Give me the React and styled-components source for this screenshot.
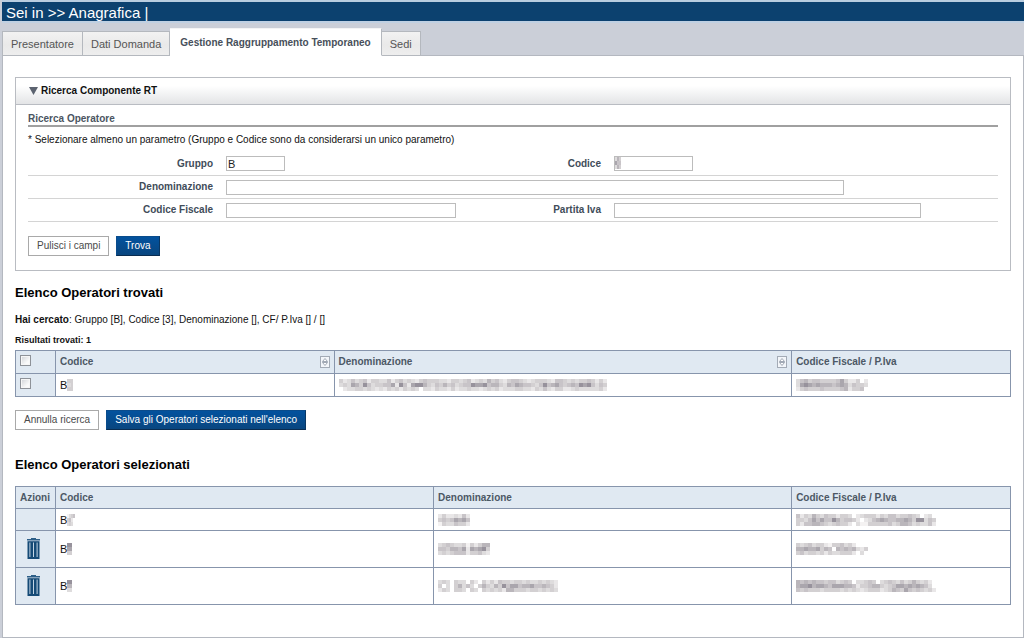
import styled, { createGlobalStyle, css } from 'styled-components'
import { useState } from 'react'

const GlobalStyle = createGlobalStyle`
    * {
        box-sizing: border-box;
    }
    body {
        margin: 0;
        background: #cbcfd8;
        color: #111;
        font-family: 'Liberation Sans', Arial, sans-serif;
        font-size: 10px;
        line-height: 14px;
    }
    button,
    input {
        font: inherit;
    }
    svg {
        display: block;
    }
`
const Root = styled.div`
    min-height: 100vh;
    display: flex;
    flex-direction: column;
    padding-left: 2px;
`
const Breadcrumb = styled.header`
    height: 23px;
    border-top: 2px solid #b9cde0;
    border-bottom: 2px solid #bfd0e2;
    background: #0c416f;
    color: #fff;
    font-size: 15px;
    line-height: 21px;
    padding: 0 4px;
`
const TabBar = styled.nav`
    display: flex;
    align-items: flex-end;
    height: 33px;
    position: relative;
    z-index: 1;
`
const Tab = styled.a`
    height: 25px;
    padding: 0 8px;
    border: 1px solid #b4b8be;
    border-left-width: 0;
    background: linear-gradient(#f2f2f2, #e9e9e9 55%, #eeeeee);
    color: #555;
    font-size: 11px;
    line-height: 24px;
    text-decoration: none;
    white-space: nowrap;
    &:first-child {
        border-left-width: 1px;
    }
    ${({ $active }) =>
        $active &&
        css`
            height: 28px;
            padding: 0 10px;
            border-top-color: #f4f4f4;
            border-bottom-color: #fff;
            background: #fff;
            color: #474f5a;
            font-size: 10px;
            font-weight: 700;
            line-height: 27px;
        `}
`
const Page = styled.main`
    flex: 1;
    margin-top: -1px;
    padding: 21px 12px 32px;
    border: 1px solid #b4b8c0;
    background: #fff;
`
const Box = styled.section`
    border: 1px solid #b9bcc2;
`
const BoxTitle = styled.h2`
    display: flex;
    align-items: center;
    gap: 3px;
    height: 27px;
    margin: 0;
    padding: 0 13px;
    border-bottom: 1px solid #b9bcc2;
    background: linear-gradient(#fff 30%, #e3e4e6);
    color: #111;
    font-size: 10px;
    font-weight: 700;
`
const SearchForm = styled.form`
    padding: 8px 12px 14px;
`
const Legend = styled.h3`
    margin: 0 0 6px;
    border-bottom: 2px solid #a0a0a0;
    color: #4b5561;
    font-size: 10px;
    font-weight: 700;
    line-height: 12px;
`
const Note = styled.p`
    margin: 0;
`
const FieldRow = styled.div`
    display: grid;
    grid-template-columns: 20% 30% 10% 40%;
    align-items: center;
    height: 23px;
    border-bottom: 1px solid #d4d4d4;
    &:first-of-type {
        margin-top: 5px;
        height: 24px;
    }
`
const Label = styled.label`
    padding-right: 9px;
    color: #414c59;
    font-weight: 700;
    text-align: right;
    white-space: nowrap;
`
const FieldCell = styled.div`
    padding-left: 4px;
    height: 15px;
    display: flex;
    position: relative;
    ${({ $wide }) => $wide && 'grid-column: 2 / -1;'}
`
const TextInput = styled.input`
    width: ${({ $width }) => $width};
    height: 15px;
    padding: 0 1px;
    border: 1px solid #bcbcbc;
    border-radius: 0;
    background: #fff;
    color: #222;
    font-size: 11px;
    outline: none;
`
const FieldMask = styled.div`
    position: absolute;
    left: 5px;
    top: 1px;
    display: flex;
`
const Buttons = styled.div`
    display: flex;
    gap: 7px;
    margin-top: ${({ $top }) => $top};
`
const Button = styled.button`
    height: 20px;
    padding: 0 8px;
    border: 1px solid #a9a9a9;
    border-radius: 0;
    background: #fff;
    color: #4a4a4a;
    line-height: 18px;
    white-space: nowrap;
    cursor: pointer;
    ${({ $primary }) =>
        $primary &&
        css`
            border-color: #0a4c8c #0a3763 #0a2c50 #0a4c8c;
            background: linear-gradient(#03529e, #09467f);
            color: #fff;
        `}
`
const Heading = styled.h2`
    margin: ${({ $top }) => $top} 0 0;
    color: #000;
    font-size: 13px;
    font-weight: 700;
    line-height: 16px;
`
const Summary = styled.p`
    margin: 12px 0 6px;
`
const Count = styled.p`
    margin: 0 0 3px;
    font-size: 9px;
    font-weight: 700;
`
const Table = styled.table`
    width: 100%;
    margin-top: ${({ $top }) => $top};
    border-collapse: collapse;
    table-layout: fixed;
    th,
    td {
        height: ${({ $rowHeight }) => $rowHeight};
        padding: 0 4px;
        border: 1px solid #8795ac;
        text-align: left;
        vertical-align: middle;
    }
    th {
        background: #e0e9f2;
        color: #4c5865;
        font-weight: 700;
        white-space: nowrap;
    }
    td:first-child {
        background: #e0e9f2;
    }
`
const Col = styled.col`
    width: ${({ $width }) => $width};
`
const Row = styled.tr`
    ${({ $tall }) => $tall && '&& > td { height: 37px; }'}
`
const HeadCell = styled.div`
    display: flex;
    align-items: center;
    justify-content: space-between;
`
const Code = styled.div`
    display: flex;
    align-items: center;
    font-size: 11px;
`
const Checkbox = styled.input`
    appearance: none;
    display: block;
    width: 11px;
    height: 11px;
    margin: 0 0 3px;
    border: 1px solid #8e9298;
    background: linear-gradient(135deg, #cfd2d6, #fafafa 70%);
    box-shadow: inset 0 0 0 1px #f6f6f6;
    &:checked {
        background: #0c416f;
    }
`
const IconButton = styled.button`
    display: block;
    margin: 0;
    padding: 0;
    border: 0;
    background: none;
    cursor: pointer;
`
const TrashButton = styled(IconButton)`
    margin: 0 auto;
    padding: 0 4px 2px 0;
`

const shades = {
    1: '#f4f2f2',
    2: '#e9e7e8',
    3: '#dedcdd',
    4: '#d3d0d2',
    5: '#c8c4c8',
    6: '#bab6bb',
    7: '#aaa6ad',
    8: '#97929c',
    9: '#827d88',
}

// One digit per cell, higher is darker
function Mosaic({ rows, w = 4, h = 4 }) {
    return (
        <svg
            width={Math.max(...rows.map((r) => r.length)) * w}
            height={rows.length * h}
            shapeRendering='crispEdges'
            aria-hidden='true'>
            {rows.map((row, y) =>
                [...row].map(
                    (c, x) =>
                        shades[c] && (
                            <rect key={`${x}-${y}`} x={x * w} y={y * h} width={w} height={h} fill={shades[c]} />
                        )
                )
            )}
        </svg>
    )
}

const TriangleIcon = () => (
    <svg width='9' height='8' viewBox='0 0 9 8' aria-hidden='true'>
        <path d='M0 0h9L4.5 8z' fill='#5c6370' />
    </svg>
)

const SortIcon = () => (
    <svg width='10' height='12' viewBox='0 0 10 12' aria-hidden='true'>
        <rect x='.5' y='.5' width='9' height='11' fill='#f3f6fa' stroke='#a3abb6' />
        <path d='M2.5 5.5 5 2.5l2.5 3zM2.5 6.5 5 9.5l2.5-3z' fill='#fff' stroke='#8a94a2' strokeWidth='.8' />
    </svg>
)

const TrashIcon = () => (
    <svg width='13' height='21' viewBox='0 0 13 21' aria-hidden='true'>
        <path d='M4 0h5v1h4v1.6H0V1h4z' fill='#2d5f88' />
        <path d='M.5 3.2h12V21H.5z' fill='#154a76' />
        <path d='M2.4 4.5h1v14.5h-1zM6 4.5h1v14.5H6zM9.6 4.5h1v14.5h-1z' fill='#c3d5e4' />
    </svg>
)

const tabs = ['Presentatore', 'Dati Domanda', 'Gestione Raggruppamento Temporaneo', 'Sedi']

const found = [
    {
        code: ['444', '334', '444'],
        name: [
            '4235345244335245343245444332443452343645324554323444325543434454242',
            '3437648534455728527886435464534558778566436576554358567545658785354',
            '.2334434323243424343.3324332423343323434233344332435324422343333342',
        ],
        tax: ['3564554444574224.2', '378767666567635443', '24544454444562445.'],
    },
]

const selected = [
    {
        code: ['1345', '452.', '343.'],
        name: ['24223252', '45457675', '14335442'],
        tax: [
            '52436435442443.2344424355344543.23.',
            '4435757558645542.235676556676488354',
            '42556654345442.31144444534665343352',
        ],
    },
    {
        tall: true,
        code: ['8', '7', '4'],
        name: ['3454334142466', '5546657276784', '3434555244532'],
        tax: ['434534421445342...', '667667465.65656324', '453443424334442.3.'],
    },
    {
        tall: true,
        code: ['8', '6', '3'],
        name: ['343.433.42.4242544344343343432', '4.3.46353.46436485775667556542', '243.443.43.4343426644434434343'],
        tax: [
            '65656554553454.33454.3454353464342.',
            '6778677657776652445664345776767653.',
            '54544434444343432344423465475454342',
        ],
    },
]

function Field({ id, label, width, wide, value = '', children }) {
    return (
        <>
            <Label htmlFor={id}>{label}</Label>
            <FieldCell $wide={wide}>
                <TextInput id={id} type='text' defaultValue={value} $width={width} />
                {children}
            </FieldCell>
        </>
    )
}

function CodeCell({ rows }) {
    return (
        <Code>
            B<Mosaic rows={rows} w={rows[0].length === 1 ? 5 : 2} />
        </Code>
    )
}

export default function App() {
    const [active, setActive] = useState(2)
    return (
        <Root>
            <GlobalStyle />
            <Breadcrumb>Sei in &gt;&gt; Anagrafica |</Breadcrumb>
            <TabBar>
                {tabs.map((tab, i) => (
                    <Tab key={tab} href='#' $active={i === active} onClick={() => setActive(i)}>
                        {tab}
                    </Tab>
                ))}
            </TabBar>
            <Page>
                <Box>
                    <BoxTitle>
                        <TriangleIcon />
                        Ricerca Componente RT
                    </BoxTitle>
                    <SearchForm onSubmit={(e) => e.preventDefault()}>
                        <Legend>Ricerca Operatore</Legend>
                        <Note>
                            * Selezionare almeno un parametro (Gruppo e Codice sono da considerarsi un unico parametro)
                        </Note>
                        <FieldRow>
                            <Field id='gruppo' label='Gruppo' width='59px' value='B' />
                            <Field id='codice' label='Codice' width='79px'>
                                <FieldMask>
                                    <Mosaic rows={['364', '755', '364']} w={2} />
                                </FieldMask>
                            </Field>
                        </FieldRow>
                        <FieldRow>
                            <Field id='denominazione' label='Denominazione' width='80%' wide />
                        </FieldRow>
                        <FieldRow>
                            <Field id='codice-fiscale' label='Codice Fiscale' width='80%' />
                            <Field id='partita-iva' label='Partita Iva' width='80%' />
                        </FieldRow>
                        <Buttons $top='14px'>
                            <Button type='reset'>Pulisci i campi</Button>
                            <Button type='submit' $primary>
                                Trova
                            </Button>
                        </Buttons>
                    </SearchForm>
                </Box>

                <Heading $top='14px'>Elenco Operatori trovati</Heading>
                <Summary>
                    <b>Hai cercato</b>: Gruppo [B], Codice [3], Denominazione [], CF/ P.Iva [] / []
                </Summary>
                <Count>Risultati trovati: 1</Count>
                <Table $rowHeight='23px' $top='0'>
                    <colgroup>
                        <Col $width='40px' />
                        <Col $width='28%' />
                        <Col $width='46%' />
                        <Col $width='22%' />
                    </colgroup>
                    <thead>
                        <tr>
                            <th>
                                <Checkbox type='checkbox' aria-label='Seleziona tutti' />
                            </th>
                            <th>
                                <HeadCell>
                                    Codice
                                    <IconButton type='button' aria-label='Ordina per codice'>
                                        <SortIcon />
                                    </IconButton>
                                </HeadCell>
                            </th>
                            <th>
                                <HeadCell>
                                    Denominazione
                                    <IconButton type='button' aria-label='Ordina per denominazione'>
                                        <SortIcon />
                                    </IconButton>
                                </HeadCell>
                            </th>
                            <th>Codice Fiscale / P.Iva</th>
                        </tr>
                    </thead>
                    <tbody>
                        {found.map((item, i) => (
                            <Row key={i}>
                                <td>
                                    <Checkbox type='checkbox' aria-label='Seleziona operatore' />
                                </td>
                                <td>
                                    <CodeCell rows={item.code} />
                                </td>
                                <td>
                                    <Mosaic rows={item.name} />
                                </td>
                                <td>
                                    <Mosaic rows={item.tax} />
                                </td>
                            </Row>
                        ))}
                    </tbody>
                </Table>
                <Buttons $top='13px'>
                    <Button type='button'>Annulla ricerca</Button>
                    <Button type='button' $primary>
                        Salva gli Operatori selezionati nell'elenco
                    </Button>
                </Buttons>

                <Heading $top='27px'>Elenco Operatori selezionati</Heading>
                <Table $rowHeight='22px' $top='13px'>
                    <colgroup>
                        <Col $width='40px' />
                        <Col $width='38%' />
                        <Col $width='36%' />
                        <Col $width='22%' />
                    </colgroup>
                    <thead>
                        <tr>
                            <th>Azioni</th>
                            <th>Codice</th>
                            <th>Denominazione</th>
                            <th>Codice Fiscale / P.Iva</th>
                        </tr>
                    </thead>
                    <tbody>
                        {selected.map((item, i) => (
                            <Row key={i} $tall={item.tall}>
                                <td>
                                    {item.tall && (
                                        <TrashButton type='button' aria-label='Elimina'>
                                            <TrashIcon />
                                        </TrashButton>
                                    )}
                                </td>
                                <td>
                                    <CodeCell rows={item.code} />
                                </td>
                                <td>
                                    <Mosaic rows={item.name} />
                                </td>
                                <td>
                                    <Mosaic rows={item.tax} />
                                </td>
                            </Row>
                        ))}
                    </tbody>
                </Table>
            </Page>
        </Root>
    )
}
